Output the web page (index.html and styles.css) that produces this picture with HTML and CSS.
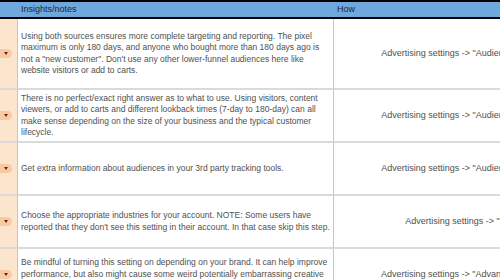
FILE: index.html
```html
<!DOCTYPE html>
<html>
    <head>
        <meta http-equiv="Content-Type" content="text/html; charset=utf-8" />
        <title>Audience checklist</title>
        <link rel="stylesheet" href="styles.css">
    </head>
    <body>
        <div class="sheet">
            <div class="hd"></div>
            <div class="hd">Insights/notes</div>
            <div class="hd how">How</div>

            <div class="flag"><span class="chip"></span></div>
            <div class="note">Using both sources ensures more complete targeting and reporting. The pixel maximum is only 180 days, and anyone who bought more than 180 days ago is not a "new customer". Don't use any other lower-funnel audiences here like website visitors or add to carts.</div>
            <div class="step">Advertising settings -&gt; "Audiences" -&gt; "Custom audience"</div>

            <div class="flag"><span class="chip"></span></div>
            <div class="note">There is no perfect/exact right answer as to what to use. Using visitors, content viewers, or add to carts and different lookback times (7-day to 180-day) can all make sense depending on the size of your business and the typical customer lifecycle.</div>
            <div class="step">Advertising settings -&gt; "Audiences" -&gt; "Custom audience"</div>

            <div class="flag"><span class="chip"></span></div>
            <div class="note">Get extra information about audiences in your 3rd party tracking tools.</div>
            <div class="step">Advertising settings -&gt; "Audiences" -&gt; "Custom audience"</div>

            <div class="flag"><span class="chip"></span></div>
            <div class="note">Choose the appropriate industries for your account. NOTE: Some users have reported that they don't see this setting in their account. In that case skip this step.</div>
            <div class="step">Advertising settings -&gt; "Industries" -&gt; "Select"</div>

            <div class="flag"><span class="chip"></span></div>
            <div class="note">Be mindful of turning this setting on depending on your brand. It can help improve performance, but also might cause some weird potentially embarrassing creative combinations, so review the previews before you publish.</div>
            <div class="step">Advertising settings -&gt; "Advantage+ creative" -&gt; "Turn off"</div>
        </div>
    </body>
</html>
```

FILE: styles.css
```css
body {
    margin:         0px;
    overflow:       hidden;
    background:     #FFFFFF;
    font-family:    "Liberation Sans", Arial, sans-serif;
    font-size:      8.5px;
    line-height:    11.5px;
    color:          #505050;
}
.sheet {
    display:        grid;
    grid-template-columns: 18px 316px 325px;
    grid-template-rows: 19px 71px 53px 53px 53px 53px;
    width:          660px;
}
.sheet > div {
    display:        flex;
    align-items:    center;
    border-right:   1px solid #C6C6C6;
    border-bottom:  2px solid #DADADA;
    padding:        0px 3px;
}
.sheet > div.hd {
    background:     #6FA8DC;
    color:          #1C2733;
    font-size:      9px;
    border-top:     2px solid #000000;
    border-bottom:  2px solid #000000;
    border-right:   none;
}
.sheet > div.hd.how {
    padding-left:   3px;
}
.sheet > div.note {
    padding:        0px 0px 0px 3px;
}
.sheet > div.flag {
    background:     #FCE5CD;
    padding:        0px;
}
.chip {
    display:        flex;
    align-items:    center;
    justify-content: center;
    width:          18px;
    height:         9px;
    margin-left:    -6px;
    border-radius:  5px;
    background:     #F8C9A2;
}
.chip:after {
    content:        "";
    margin-left:    5px;
    border-left:    2.5px solid transparent;
    border-right:   2.5px solid transparent;
    border-top:     3px solid #5A2E10;
}
.sheet > div.step {
    justify-content: center;
    text-align:     center;
    white-space:    nowrap;
    font-size:      9px;
}
```
